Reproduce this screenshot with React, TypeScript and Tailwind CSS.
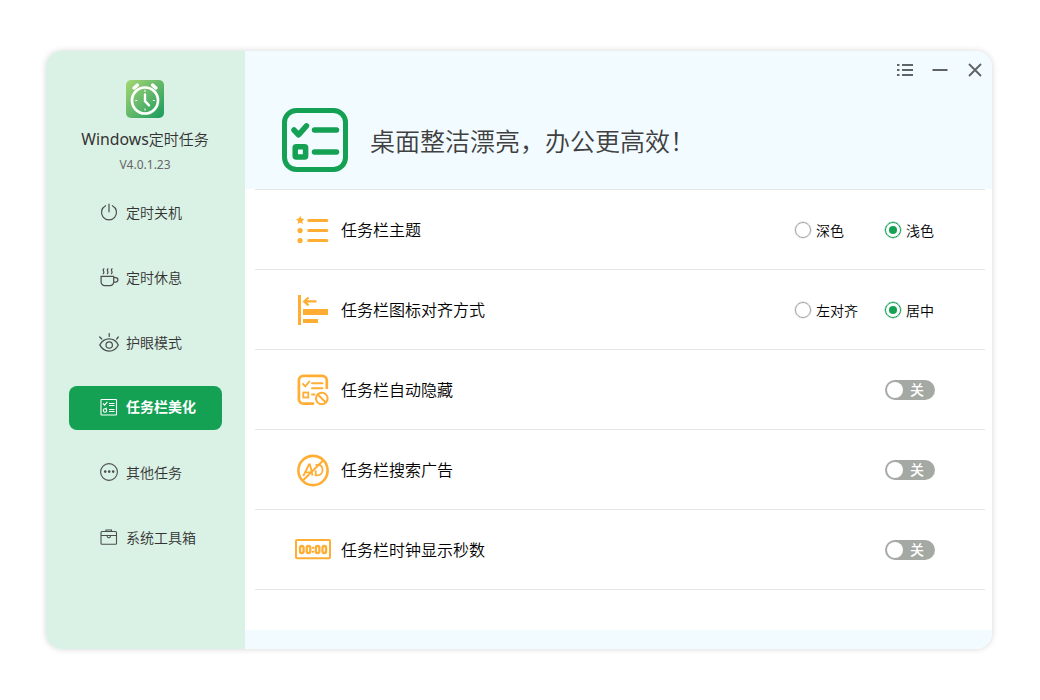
import type { ReactNode } from "react";

type NavItem = { label: string; icon: ReactNode; active?: boolean };

function PowerIcon() {
  return (
    <svg className="size-5" viewBox="0 0 20 20" fill="none" stroke="#4b4f4d" strokeWidth="1.2" strokeLinecap="round">
      <path d="M10 1.200v7.600M6.600 2.700a7.500 7.500 0 1 0 6.800 0" />
    </svg>
  );
}

function CupIcon() {
  return (
    <svg className="size-5" viewBox="0 0 20 20" fill="none" stroke="#4b4f4d" strokeWidth="1.25" strokeLinecap="round">
      <path d="M2.100 8.300h12.600v5.600a3.600 3.600 0 0 1-3.600 3.600H5.700a3.600 3.600 0 0 1-3.600-3.600zM14.800 9.600h1.900a2.100 2.100 0 0 1 0 4.400h-2" />
      <path d="M4.900 .8c-2.200 1.500 1.300 2.700-.6 4.900M9 .8c-2.200 1.500 1.300 2.700-.6 4.900M13.100 .8c-2.200 1.500 1.300 2.700-.6 4.900" />
    </svg>
  );
}

function EyeIcon() {
  return (
    <svg className="size-5" viewBox="0 0 20 20" fill="none" stroke="#4b4f4d" strokeWidth="1.25" strokeLinecap="round">
      <path d="M.8 11.900C3 7.900 6.300 5.900 10 5.900s7.400 2 9.300 6c-1.900 4-5.300 6.100-9.300 6.100S2.800 15.900.8 11.900z" />
      <circle cx="10.200" cy="12" r="3.200" />
      <path d="M10.200.6v2.800M.7 4l2 2M19.300 4l-1.600 2" />
    </svg>
  );
}

function TaskIcon() {
  return (
    <svg className="size-5" viewBox="0 0 20 20" fill="none" stroke="white" strokeWidth="1.100">
      <rect x="2" y="1.500" width="15.500" height="15.500" rx="0.600" />
      <path d="M4 5.500l1.600 1.700 2.800-3.400M10 5.500h5.500M10 7.500h5.500M10 11.500h5.500M10 13.500h5.500" />
      <circle cx="6" cy="12.500" r="1.700" />
      <path d="M6 10.800l1.800-.8" />
    </svg>
  );
}

function MoreIcon() {
  return (
    <svg className="size-5" viewBox="0 0 20 20" fill="none" stroke="#4b4f4d" strokeWidth="1.100">
      <circle cx="10" cy="9" r="8.400" />
      <path d="M6.200 8.600h.01M10.200 8.600h.01M14.200 8.600h.01" strokeWidth="2.700" strokeLinecap="round" />
    </svg>
  );
}

function ToolboxIcon() {
  return (
    <svg className="size-5" viewBox="0 0 20 20" fill="none" stroke="#4b4f4d" strokeWidth="1.100">
      <rect x="2" y="3.500" width="15.500" height="12.800" rx="1" />
      <path d="M7 3.500v-1.500h5.500v1.500M2 7.500h15.500M8.200 7.700v.5a1.600 1.600 0 0 0 3.200 0v-.5" />
    </svg>
  );
}

function ClockLogo() {
  return (
    <svg className="size-[38px]" viewBox="0 0 38 38" fill="none" stroke="white">
      <defs>
        <linearGradient id="logo" x1="0" y1="0" x2="1" y2="1">
          <stop offset="0" stopColor="#a5d872" />
          <stop offset="0.500" stopColor="#62b86b" />
          <stop offset="1" stopColor="#169b5b" />
        </linearGradient>
      </defs>
      <rect width="38" height="38" rx="5" fill="url(#logo)" stroke="none" />
      <circle cx="19" cy="20.500" r="13" strokeWidth="2.700" />
      <path d="M8 8l3.400-2.900M30 8l-3.400-2.900" strokeWidth="3.400" strokeLinecap="round" />
      <path d="M19 14.500v6.700l4 4.200" strokeWidth="2.400" strokeLinecap="round" strokeLinejoin="round" />
      <path d="M19 9.800v2.200M19 28.500v2.200M9.300 20.500h2M26.800 20.500h2" strokeWidth="1" />
    </svg>
  );
}

function HeroIcon() {
  return (
    <svg className="h-16 w-[66px]" viewBox="0 0 66 64" fill="none" stroke="#14a154" strokeLinecap="round" strokeLinejoin="round">
      <rect x="2.500" y="2.500" width="61" height="59" rx="12" strokeWidth="5" />
      <path d="M12 22l4.500 4.800 8-9M32.500 22H54.500M32.500 44H54.500" strokeWidth="5.500" />
      <rect x="13.200" y="38.700" width="10.400" height="10.400" rx="1" strokeWidth="5.500" />
    </svg>
  );
}

function ThemeIcon() {
  return (
    <svg className="size-9" viewBox="0 0 36 36" fill="#ffad33">
      <path d="M5.200 3.800l1.300 2.700 2.900.4-2.200 2 .6 3-2.600-1.500-2.600 1.500.6-3-2.200-2 2.900-.4z" />
      <circle cx="5.100" cy="18.500" r="2.600" />
      <circle cx="5.100" cy="28.500" r="2.600" />
      <path d="M13.700 8.400h18.100M13.700 18.500h18.100M13.700 28.500h18.100" stroke="#ffad33" strokeWidth="3" strokeLinecap="round" />
    </svg>
  );
}

function AlignIcon() {
  return (
    <svg className="size-9" viewBox="0 0 36 36" fill="#ffad33">
      <path d="M3 3h3v30H3zM8 17h25v6H8zM8 27h15v4H8z" />
      <path d="M21.500 9.400H9.200M13.500 5.500L9.200 9.400l4.300 3.900" fill="none" stroke="#ffad33" strokeWidth="2.300" />
    </svg>
  );
}

function HideIcon() {
  return (
    <svg className="size-9" viewBox="0 0 36 36" fill="none" stroke="#ffad33" strokeWidth="2.400" strokeLinecap="round">
      <path d="M31.800 16V8.400a4.500 4.500 0 0 0-4.500-4.500h-19A4.500 4.500 0 0 0 3.900 8.400v18.800a4.500 4.500 0 0 0 4.500 4.500H18" strokeWidth="2.700" />
      <path d="M8 12l2.300 2.300 4-4.800M17 11.200h10.500M17 16.200h10.500M17 22.500h2.500" strokeWidth="1.900" />
      <rect x="8.300" y="20.500" width="5" height="5" strokeWidth="1.800" />
      <circle cx="26.800" cy="26.500" r="5.800" strokeWidth="2" />
      <path d="M22.800 22.500l8 8" strokeWidth="2" />
    </svg>
  );
}

function AdIcon() {
  return (
    <svg className="size-9" viewBox="0 0 36 36" fill="none" stroke="#ffad33">
      <circle cx="18" cy="18.500" r="14.600" strokeWidth="2.600" />
      <path d="M28.300 8.200L7.700 28.800" strokeWidth="2" />
      <path d="M8.300 24l5.700-11.500h1l2.500 11M10.500 20.300h5" strokeWidth="1.800" />
      <path d="M20.500 12.800h2.300c3 0 4.700 1.900 4.700 5s-1.800 5.600-5 5.600h-2.700M20.700 18.500v5" strokeWidth="1.800" />
    </svg>
  );
}

function DigitalIcon() {
  return (
    <svg className="size-9" viewBox="0 0 36 36" fill="none" stroke="#ffad33" strokeWidth="2.300">
      <rect x="1" y="8" width="34" height="18.200" rx="1" strokeWidth="2" />
      <rect x="5" y="14" width="3.600" height="7" rx="1.800" />
      <rect x="11.700" y="14" width="3.600" height="7" rx="1.800" />
      <rect x="20.800" y="14" width="3.600" height="7" rx="1.800" />
      <rect x="27.500" y="14" width="3.600" height="7" rx="1.800" />
      <path d="M18.050 14.800v2M18.050 18.700v2" />
    </svg>
  );
}

const nav: NavItem[] = [
  { label: "定时关机", icon: <PowerIcon /> },
  { label: "定时休息", icon: <CupIcon /> },
  { label: "护眼模式", icon: <EyeIcon /> },
  { label: "任务栏美化", icon: <TaskIcon />, active: true },
  { label: "其他任务", icon: <MoreIcon /> },
  { label: "系统工具箱", icon: <ToolboxIcon /> },
];

function Radio({ label, checked }: { label: string; checked?: boolean }) {
  return (
    <button className="flex w-[90px] items-center gap-[5px] text-left text-sm whitespace-nowrap text-black">
      {checked ? (
        <span className="flex size-4 items-center justify-center rounded-full border-[1.500px] border-[#14a154] ring-[0.500px] ring-[#14a154]/60">
          <span className="size-2 rounded-full bg-[#14a154]" />
        </span>
      ) : (
        <span className="size-4 rounded-full border border-[#a6a6a6] ring-[0.500px] ring-[#a6a6a6]/60" />
      )}
      <span className="pt-0.5">{label}</span>
    </button>
  );
}

function Toggle() {
  return (
    <button className="mr-[50px] flex h-5 w-[50px] items-center gap-[7px] rounded-full bg-[#a4a9a4] pl-0.5 text-sm leading-5 text-white">
      <span className="size-4 rounded-full bg-white" />
      <span className="font-medium">关</span>
    </button>
  );
}

function SettingRow({ icon, label, children }: { icon: ReactNode; label: string; children: ReactNode }) {
  return (
    <div className="flex h-20 items-center border-b border-[#e6e6e6] pl-10">
      {icon}
      <span className="ml-2.5 text-base text-black">{label}</span>
      <div className="ml-auto flex">{children}</div>
    </div>
  );
}

export default function App() {
  return (
    <div className="h-[700px] w-[1040px] bg-white pt-[51px] pl-[46px] font-['Noto_Sans','Noto_Sans_CJK_SC',sans-serif] font-[350]">
      <div className="flex h-[598px] w-[946px] overflow-hidden rounded-[16px] bg-white shadow-[0_0_6px_rgba(0,0,0,0.17)]">
        <aside className="flex w-[199px] flex-col items-center bg-[#daf1e5] pt-[29px] pr-px">
          <ClockLogo />
          <div className="mt-[9px] flex items-baseline text-[15px] leading-6 text-[#333]">
            <span className="text-[15.800px] font-normal">Windows</span>
            <span>定时任务</span>
          </div>
          <div className="mt-0.5 text-xs leading-6 font-normal text-[#666]">V4.0.1.23</div>
          <nav className="mt-3.5 ml-px flex w-[153px] flex-col gap-[21px]">
            {nav.map((item) => (
              <button
                key={item.label}
                className={
                  item.active
                    ? "flex h-11 items-center gap-[7px] rounded-lg bg-[#14a154] pl-[30px] text-sm font-bold text-white"
                    : "flex h-11 items-center gap-[7px] rounded-lg pl-[30px] text-sm text-[#333]"
                }
              >
                {item.icon}
                <span className={item.active ? "pb-0.5" : ""}>{item.label}</span>
              </button>
            ))}
          </nav>
        </aside>
        <main className="flex flex-1 flex-col">
          <header className="h-[138px] bg-[#f2fbff]">
            <div className="flex h-[38px] items-center justify-end gap-[17px] pr-2">
              <svg className="size-[18px]" viewBox="0 0 18 18" stroke="#606465" strokeWidth="2">
                <path d="M1 4h2.500M6 4h11M1 9h2.500M6 9h11M1 14h2.500M6 14h11" />
              </svg>
              <svg className="size-[18px]" viewBox="0 0 18 18" stroke="#606465" strokeWidth="2">
                <path d="M1.500 9h15" />
              </svg>
              <svg className="size-[18px]" viewBox="0 0 18 18" stroke="#606465" strokeWidth="1.900">
                <path d="M3 3l12 12M15 3L3 15" />
              </svg>
            </div>
            <div className="mt-[19px] flex items-center pl-[37px]">
              <HeroIcon />
              <h1 className="ml-[22px] pt-0.5 text-[25px] leading-9 text-[#404040]">桌面整洁漂亮，办公更高效！</h1>
            </div>
          </header>
          <section className="mr-[7px] ml-2.5 flex-1 border-t border-[#e6e6e6]">
            <SettingRow icon={<ThemeIcon />} label="任务栏主题">
              <div className="mr-2.5 flex">
                <Radio label="深色" />
                <Radio label="浅色" checked />
              </div>
            </SettingRow>
            <SettingRow icon={<AlignIcon />} label="任务栏图标对齐方式">
              <div className="mr-2.5 flex">
                <Radio label="左对齐" />
                <Radio label="居中" checked />
              </div>
            </SettingRow>
            <SettingRow icon={<HideIcon />} label="任务栏自动隐藏">
              <Toggle />
            </SettingRow>
            <SettingRow icon={<AdIcon />} label="任务栏搜索广告">
              <Toggle />
            </SettingRow>
            <SettingRow icon={<DigitalIcon />} label="任务栏时钟显示秒数">
              <Toggle />
            </SettingRow>
          </section>
          <footer className="h-[19px] bg-[#f2fbff]" />
        </main>
      </div>
    </div>
  );
}
